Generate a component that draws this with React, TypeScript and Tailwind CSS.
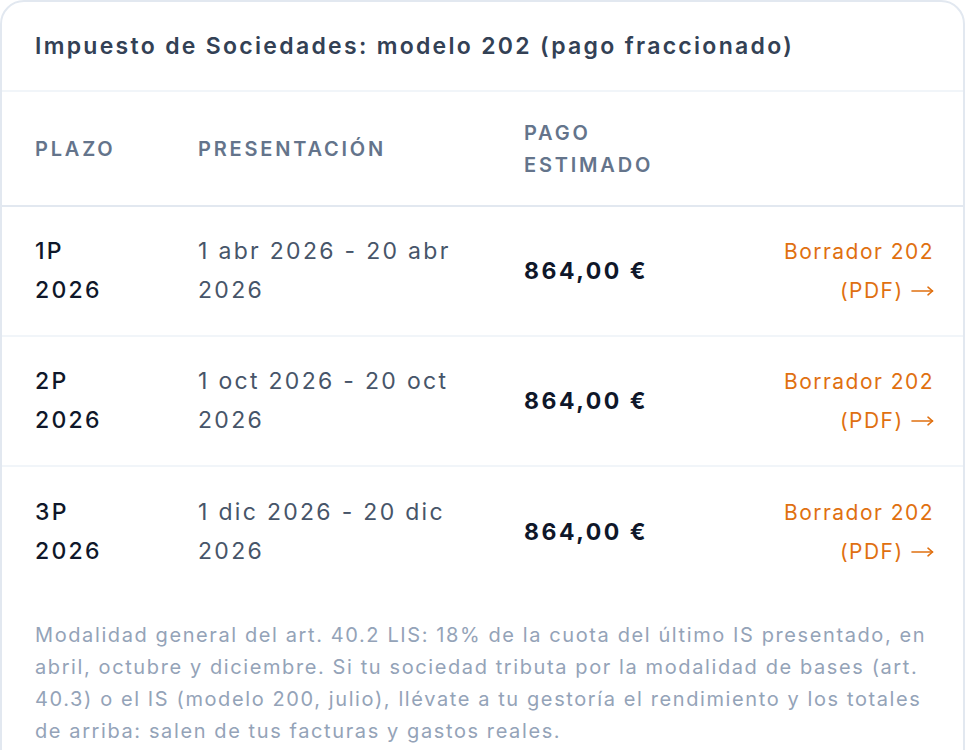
const rows = [
  { plazo: "1P 2026", fechas: "1 abr 2026 - 20 abr 2026", importe: "864,00 €" },
  { plazo: "2P 2026", fechas: "1 oct 2026 - 20 oct 2026", importe: "864,00 €" },
  { plazo: "3P 2026", fechas: "1 dic 2026 - 20 dic 2026", importe: "864,00 €" },
];

function ArrowRight() {
  return (
    <svg width="23" height="12" viewBox="0 0 23 12" className="inline-block align-[1px]" fill="none" stroke="currentColor" strokeWidth="1.6" strokeLinecap="round" strokeLinejoin="round">
      <path d="M1 6h20.5" />
      <path d="M17 2.2l4.5 3.8-4.5 3.8" />
    </svg>
  );
}

export default function App() {
  return (
    <div className="min-h-screen bg-white" style={{ fontFamily: "Inter, 'Noto Sans', sans-serif" }}>
      <div className="w-[965px] rounded-[24px] border-2 border-[#e2e8f0] bg-white overflow-hidden">
        <div className="h-[90px] flex items-center px-[33px] border-b-2 border-[#f1f5f9]">
          <h2 className="text-[23px] font-semibold tracking-[0.1em] text-[#334155] whitespace-nowrap">
            Impuesto de Sociedades: modelo 202 (pago fraccionado)
          </h2>
        </div>

        <div className="grid grid-cols-[163px_326px_1fr_180px] pl-[33px] pr-[29px] border-b-2 border-[#e2e8f0] h-[115px] items-center text-[20px] font-semibold uppercase tracking-[0.14em] text-[#64748b] leading-[32px]">
          <div>Plazo</div>
          <div>Presentación</div>
          <div className="max-w-[150px]">Pago estimado</div>
          <div></div>
        </div>

        {rows.map((r, i) => (
          <div
            key={r.plazo}
            className={`grid grid-cols-[163px_326px_1fr_180px] pl-[33px] pr-[29px] h-[130px] items-center text-[23px] leading-[39px] tracking-[0.1em] ${i < rows.length - 1 ? "border-b-2 border-[#f1f5f9]" : ""}`}
          >
            <div className="max-w-[90px] font-medium text-[#0f172a]">{r.plazo}</div>
            <div className="max-w-[290px] text-[#475569]">{r.fechas}</div>
            <div className="font-bold text-[#0f172a] tracking-[0.11em]">{r.importe}</div>
            <div className="text-right text-[21px] tracking-[0.07em] text-[#e07010]">
              <a href="#">
                Borrador 202 (PDF) <ArrowRight />
              </a>
            </div>
          </div>
        ))}

        <p className="px-[33px] pt-[22px] pb-8 text-[20px] leading-[32px] tracking-[0.08em] text-[#94a3b8]">
          Modalidad general del art. 40.2 LIS: 18% de la cuota del último IS presentado, en abril, octubre y diciembre. Si tu sociedad tributa por la modalidad de bases (art. 40.3) o el IS (modelo 200, julio), llévate a tu gestoría el rendimiento y los totales de arriba: salen de tus facturas y gastos reales.
        </p>
      </div>
    </div>
  );
}
